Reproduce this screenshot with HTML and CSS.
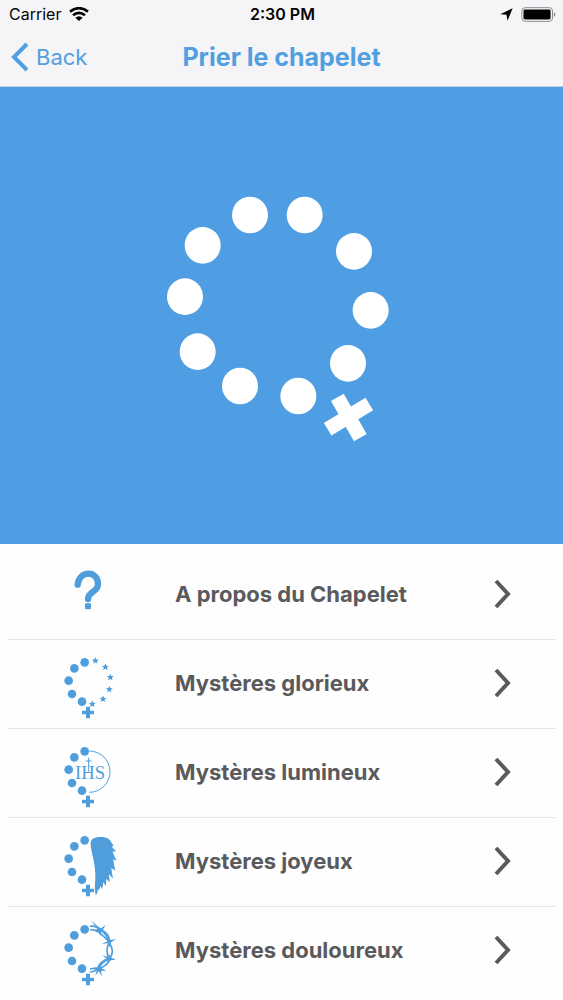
FILE: index.html
```html
<!DOCTYPE html>
<html lang="fr">
<head>
<meta charset="utf-8">
<meta name="viewport" content="width=device-width, initial-scale=1">
<title>Prier le chapelet</title>
<link rel="stylesheet" href="styles.css">
</head>
<body>
<svg class="defs" width="0" height="0" aria-hidden="true">
  <defs>
    <symbol id="beads" viewBox="0 0 240 240">
      <circle cx="104" cy="55" r="13"/><circle cx="73" cy="73" r="13"/><circle cx="56" cy="110" r="13"/><circle cx="66" cy="150" r="13"/><circle cx="96" cy="173" r="13"/>
      <path d="M108 188h12v12h12v11h-12v12h-12v-12H96v-11h12z"/>
    </symbol>
    <symbol id="star" viewBox="-10 -10 20 20">
      <path d="M0-10 2.6-3.4 9.6-3 4.2 1.4 6 8.2 0 4.5-6 8.2-4.2 1.4-9.6-3-2.6-3.4z"/>
    </symbol>
    <symbol id="chevron" viewBox="0 0 18 30">
      <path d="M2 2 14 15 2 28" fill="none" stroke="currentColor" stroke-width="4"/>
    </symbol>
  </defs>
</svg>
<header class="top">
  <div class="status">
    <div class="carrier">
      <span>Carrier</span>
      <svg class="wifi" viewBox="0 0 60 42" aria-hidden="true">
        <g fill="none" stroke="currentColor" stroke-width="8">
          <path d="M3 14Q30-7 57 14"/><path d="M12 25Q30 10 48 25"/>
        </g>
        <path d="M19 32Q30 23 41 32L30 42z"/>
      </svg>
    </div>
    <time class="clock">2:30 PM</time>
    <div class="indicators">
      <svg class="location" viewBox="0 0 38 38" aria-hidden="true"><path d="M37 1 22 37 19 20 1 18z"/></svg>
      <svg class="battery" viewBox="0 0 106 46" aria-hidden="true">
        <rect x="2" y="2" width="94" height="42" rx="10" fill="none" stroke="#8d8c90" stroke-width="3"/>
        <rect x="7" y="8" width="83" height="30" rx="4"/>
        <path d="M100 16q5 2 5 7t-5 7z" fill="#8d8c90"/>
      </svg>
    </div>
  </div>
  <nav class="bar">
    <button class="back" type="button">
      <svg class="back-icon" viewBox="0 0 18 30" aria-hidden="true"><path d="M16 2 3 15 16 28" fill="none" stroke="currentColor" stroke-width="4"/></svg>
      Back
    </button>
    <h1 class="title">Prier le chapelet</h1>
  </nav>
</header>
<main>
  <section class="hero">
    <svg class="rosary" viewBox="0 0 780 810" role="img" aria-label="Chapelet">
      <g fill="#fff">
        <ellipse cx="300" cy="105" rx="54" ry="55"/><ellipse cx="464" cy="105" rx="54" ry="55"/>
        <ellipse cx="612" cy="214" rx="54" ry="55"/><ellipse cx="662" cy="391" rx="54" ry="55"/>
        <ellipse cx="594" cy="550" rx="54" ry="55"/><ellipse cx="445" cy="648" rx="54" ry="55"/>
        <ellipse cx="270" cy="618" rx="54" ry="55"/><ellipse cx="143" cy="515" rx="54" ry="55"/>
        <ellipse cx="105" cy="350" rx="54" ry="55"/><ellipse cx="158" cy="196" rx="54" ry="55"/>
      </g>
      <path d="M562 652 631 773M533 748 658 672" stroke="#fff" stroke-width="44" fill="none"/>
    </svg>
  </section>
  <ul class="menu">
    <li><a class="row" href="#apropos">
      <svg class="icon" viewBox="0 0 240 240" aria-hidden="true">
        <path d="M83 89C87 45 144 46 144 87C144 113 114 108 114 132" fill="none" stroke="currentColor" stroke-width="19" stroke-linecap="round"/>
        <rect x="105" y="145" width="18" height="18" rx="3"/>
      </svg>
      <span class="label">A propos du Chapelet</span>
      <svg class="chevron" aria-hidden="true"><use href="#chevron"/></svg></a></li>
    <li><a class="row" href="#glorieux">
      <svg class="icon" viewBox="0 0 240 240" aria-hidden="true">
        <use href="#beads" width="240" height="240"/>
        <use href="#star" x="125" y="39" width="22" height="22"/>
        <use href="#star" x="155" y="58" width="22" height="22"/>
        <use href="#star" x="170" y="89" width="22" height="22"/>
        <use href="#star" x="167" y="125" width="22" height="22"/>
        <use href="#star" x="148" y="154" width="22" height="22"/>
        <use href="#star" x="116" y="169" width="22" height="22"/>
      </svg>
      <span class="label">Mystères glorieux</span>
      <svg class="chevron" aria-hidden="true"><use href="#chevron"/></svg></a></li>
    <li><a class="row" href="#lumineux">
      <svg class="icon" viewBox="0 0 240 240" aria-hidden="true">
        <use href="#beads" width="240" height="240"/>
        <path d="M118 54A62 62 0 0 1 118 178" fill="none" stroke="currentColor" stroke-width="3"/>
        <path d="M116 74v42M107 84h18" fill="none" stroke="currentColor" stroke-width="3"/>
        <text class="monogram" x="120" y="137" text-anchor="middle">IHS</text>
      </svg>
      <span class="label">Mystères lumineux</span>
      <svg class="chevron" aria-hidden="true"><use href="#chevron"/></svg></a></li>
    <li><a class="row" href="#joyeux">
      <svg class="icon" viewBox="0 0 240 240" aria-hidden="true">
        <use href="#beads" width="240" height="240"/>
        <path d="M122 67C121 53 130 46 147 45C169 43 180 50 185 63C188 67 190 68 190 73L185 73Q190 83 199 87L188 89Q192 104 201 116L190 112Q192 132 196 146L184 138Q186 154 189 170L177 156Q178 169 179 181L169 170Q169 182 167 192L160 180Q159 192 156 202L151 192Q149 202 145 206L144 200Q142 218 137 219Q133 200 136 172C138 122 124 99 122 67z"/>
      </svg>
      <span class="label">Mystères joyeux</span>
      <svg class="chevron" aria-hidden="true"><use href="#chevron"/></svg></a></li>
    <li><a class="row" href="#douloureux">
      <svg class="icon" viewBox="0 0 240 240" aria-hidden="true">
        <use href="#beads" width="240" height="240"/>
        <g fill="none" stroke="currentColor" stroke-width="5">
          <path d="M120 46C140 42 152 56 166 64C180 74 178 90 178 96C190 112 190 130 178 142C176 162 160 166 148 174C138 178 130 183 120 183"/>
          <path d="M120 57C134 53 138 62 150 64C158 78 170 80 178 94C168 110 170 128 177 144C160 146 146 158 144 172C136 170 130 173 120 174"/>
          <path d="M150 56C164 60 170 76 178 92M148 172C150 160 164 150 177 144"/>
        </g>
        <path d="M123 28 151 53 167 42 157 59 166 64 152 63 151 76 144 61 126 59 142 54zM155 98 173 91 164 81 178 87 198 85 183 94 178 110 175 97zM157 132 176 139 177 126 181 139 198 146 182 148 171 162 174 147zM126 171 145 170 152 159 153 172 169 179 153 180 156 196 146 181 136 194 140 179z"/>
      </svg>
      <span class="label">Mystères douloureux</span>
      <svg class="chevron" aria-hidden="true"><use href="#chevron"/></svg></a></li>
  </ul>
</main>
</body>
</html>
```

FILE: styles.css
```css
* { box-sizing: border-box; }

body {
  margin: 0;
  background: #fefefe;
  color: #5a595c;
  font-family: Inter, "Liberation Sans", sans-serif;
}

.defs { display: block; }

.top {
  background: #f5f4f7;
  border-bottom: 1px solid #c4cfdc;
}

.status {
  display: grid;
  grid-template-columns: 1fr auto 1fr;
  align-items: center;
  height: 28px;
  padding: 0 7px 0 9px;
  color: #050505;
  font-size: 16px;
}

.carrier, .indicators {
  display: flex;
  align-items: center;
  gap: 8px;
}

.indicators { justify-content: flex-end; }
.clock { font-weight: 600; }
.wifi { width: 20px; height: 14px; }
.location { width: 13px; height: 13px; }
.battery { width: 35px; height: 15px; }

.bar {
  display: grid;
  grid-template-columns: 1fr auto 1fr;
  align-items: center;
  height: 58px;
  padding: 0 11px;
  color: #519fe0;
}

.back {
  display: flex;
  align-items: center;
  justify-self: start;
  gap: 7px;
  padding: 0;
  border: 0;
  background: none;
  color: inherit;
  font: 400 22px/28px Inter, "Liberation Sans", sans-serif;
}

.back-icon { width: 18px; height: 30px; }

.title {
  margin: 0;
  font-size: 25px;
  font-weight: 700;
  line-height: 30px;
}

.hero {
  display: flex;
  align-items: center;
  justify-content: center;
  min-height: 457px;
  padding: 0 4px 2px 0;
  background: #4f9ee3;
}

.rosary { width: 260px; height: 270px; }

.menu {
  margin: 0;
  padding: 7px 7px 0 8px;
  list-style: none;
}

.menu li { border-bottom: 1px solid #e6e4e9; }
.menu li:last-child { border-bottom: 0; }

.row {
  display: flex;
  align-items: center;
  height: 88px;
  padding: 0 44px 0 42px;
  color: inherit;
  text-decoration: none;
}

.icon {
  width: 80px;
  height: 80px;
  color: #4f9edb;
  fill: currentColor;
}

.monogram {
  font-family: "Liberation Serif", serif;
  font-size: 56px;
}

.label {
  flex: 1;
  margin-left: 45px;
  padding-bottom: 2px;
  font-size: 22px;
  font-weight: 700;
  line-height: 28px;
}

.chevron {
  width: 18px;
  height: 30px;
  margin-bottom: 2px;
}
```
